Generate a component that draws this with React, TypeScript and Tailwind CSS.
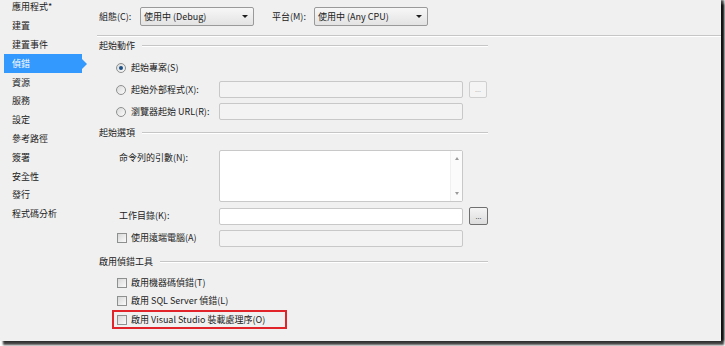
const sideItems = [
  "應用程式*",
  "建置",
  "建置事件",
  "偵錯",
  "資源",
  "服務",
  "設定",
  "參考路徑",
  "簽署",
  "安全性",
  "發行",
  "程式碼分析",
];

const Sidebar = () => {
  return (
    <div className="w-[88px] shrink-0 -mt-[2px] flex flex-col">
      {sideItems.map((item) =>
        item === "偵錯" ? (
          <div key={item} className="h-[18.8px] flex items-center">
            <div className="ml-[4px] w-[78px] h-full bg-[#3399ff] text-white flex items-center pl-[8px]">
              {item}
            </div>
            <div className="w-0 h-0 border-y-[5px] border-y-transparent border-l-[5px] border-l-[#3399ff]" />
          </div>
        ) : (
          <div key={item} className="h-[18.8px] flex items-center pl-[12px]">
            {item}
          </div>
        )
      )}
    </div>
  );
};

const Select = ({ value }: { value: string }) => (
  <div className="w-[114px] h-[19px] border border-[#9a9a9a] rounded-[2px] bg-linear-to-b from-[#f7f7f7] to-[#e3e3e3] flex items-center pl-[3px] pr-[5px]">
    <span className="flex-1">{value}</span>
    <span className="w-0 h-0 border-x-[3px] border-x-transparent border-t-[3px] border-t-[#1e1e1e]" />
  </div>
);

const Section = ({ title }: { title: string }) => (
  <div className="h-[14px] w-[391px] flex items-center pl-[2px]">
    <span>{title}</span>
    <div className="flex-1 ml-[7px] border-t border-t-[#c6c6c6] border-b border-b-white" />
  </div>
);

const Radio = ({ checked }: { checked?: boolean }) => (
  <span className="w-[10px] h-[10px] rounded-full border border-[#8e8f8f] bg-linear-to-br from-[#dadada] to-[#fbfbfb] flex items-center justify-center">
    {checked && <span className="w-[4px] h-[4px] rounded-full bg-[#1b4f86]" />}
  </span>
);

const Checkbox = () => (
  <span className="w-[10px] h-[10px] shrink-0 border border-[#8e8f8f] bg-linear-to-br from-[#d8d8d8] to-[#fafafa]" />
);

const Field = ({ white }: { white?: boolean }) => (
  <div
    className={
      white
        ? "w-[244px] h-[17px] border border-[#c8c8c8] rounded-[2px] bg-white"
        : "w-[244px] h-[17px] border border-[#c8c8c8] rounded-[2px] bg-[#f3f3f3]"
    }
  />
);

const Browse = ({ enabled }: { enabled?: boolean }) => (
  <div
    className={
      enabled
        ? "ml-[6px] w-[19px] h-[18px] border border-[#707070] rounded-[2px] bg-linear-to-b from-[#f4f4f4] to-[#dcdcdc] flex items-center justify-center text-[7px] leading-none text-[#444]"
        : "ml-[6px] w-[18px] h-[17px] border border-[#cfcfcf] rounded-[2px] bg-[#f4f4f4] flex items-center justify-center text-[7px] leading-none text-[#b0b0b0]"
    }
  >
    ...
  </div>
);

export default function App() {
  return (
    <div className="w-[725px] h-[346px] bg-white">
      <div className="w-[721px] h-[341px] bg-[#f0f0f0] shadow-[3px_0_2px_rgba(0,0,0,0.75),3px_4px_2px_rgba(0,0,0,0.75)] flex text-[9px] leading-[14px] text-[#222] font-['Noto_Sans_CJK_TC',sans-serif] overflow-hidden">
        <Sidebar />
        <div className="flex-1 pl-[9px] flex flex-col">
          <div className="mt-[7px] h-[19px] flex items-center">
            <span className="w-[43px] pl-[2px]">組態(C):</span>
            <Select value="使用中 (Debug)" />
            <span className="ml-[18px] w-[42px]">平台(M):</span>
            <Select value="使用中 (Any CPU)" />
          </div>
          <div className="mt-[9px] border-t border-t-[#c6c6c6] border-b border-b-white" />

          <div className="mt-[2px]">
            <Section title="起始動作" />
          </div>
          <div className="mt-[8px] h-[14px] flex items-center pl-[19px] gap-[5px]">
            <Radio checked />
            <span>起始專案(S)</span>
          </div>
          <div className="mt-[6px] h-[17px] flex items-center">
            <div className="w-[122px] pl-[19px] flex items-center gap-[5px]">
              <Radio />
              <span>起始外部程式(X):</span>
            </div>
            <Field />
            <Browse />
          </div>
          <div className="mt-[5px] h-[17px] flex items-center">
            <div className="w-[122px] pl-[19px] flex items-center gap-[5px]">
              <Radio />
              <span>瀏覽器起始 URL(R):</span>
            </div>
            <Field />
          </div>

          <div className="mt-[6px]">
            <Section title="起始選項" />
          </div>
          <div className="mt-[10px] h-[52px] flex items-start">
            <span className="w-[122px] pl-[22px] pt-[1px]">命令列的引數(N):</span>
            <div className="w-[244px] h-[52px] border border-[#c8c8c8] rounded-[2px] bg-white flex">
              <div className="flex-1" />
              <div className="w-[12px] border-l border-l-[#f0f0f0] bg-[#fbfbfb] flex flex-col items-center justify-between py-[6px]">
                <span className="w-0 h-0 border-x-[2.5px] border-x-transparent border-b-[3px] border-b-[#9a9a9a]" />
                <span className="w-0 h-0 border-x-[2.5px] border-x-transparent border-t-[3px] border-t-[#9a9a9a]" />
              </div>
            </div>
          </div>
          <div className="mt-[5px] h-[18px] flex items-center">
            <span className="w-[122px] pl-[22px]">工作目錄(K):</span>
            <Field white />
            <Browse enabled />
          </div>
          <div className="mt-[4px] h-[18px] flex items-center">
            <div className="w-[122px] pl-[20px] flex items-center gap-[4px]">
              <Checkbox />
              <span>使用遠端電腦(A)</span>
            </div>
            <Field />
          </div>

          <div className="mt-[8px]">
            <Section title="啟用偵錯工具" />
          </div>
          <div className="mt-[5px] h-[18px] flex items-center pl-[20px] gap-[4px]">
            <Checkbox />
            <span>啟用機器碼偵錯(T)</span>
          </div>
          <div className="h-[18px] flex items-center pl-[20px] gap-[4px]">
            <Checkbox />
            <span>啟用 SQL Server 偵錯(L)</span>
          </div>
          <div className="ml-[15px] w-[175px] h-[19px] border-2 border-[#e0242a] flex items-center pl-[3px] gap-[4px]">
            <Checkbox />
            <span>啟用 Visual Studio 裝載處理序(O)</span>
          </div>
        </div>
      </div>
    </div>
  );
}
